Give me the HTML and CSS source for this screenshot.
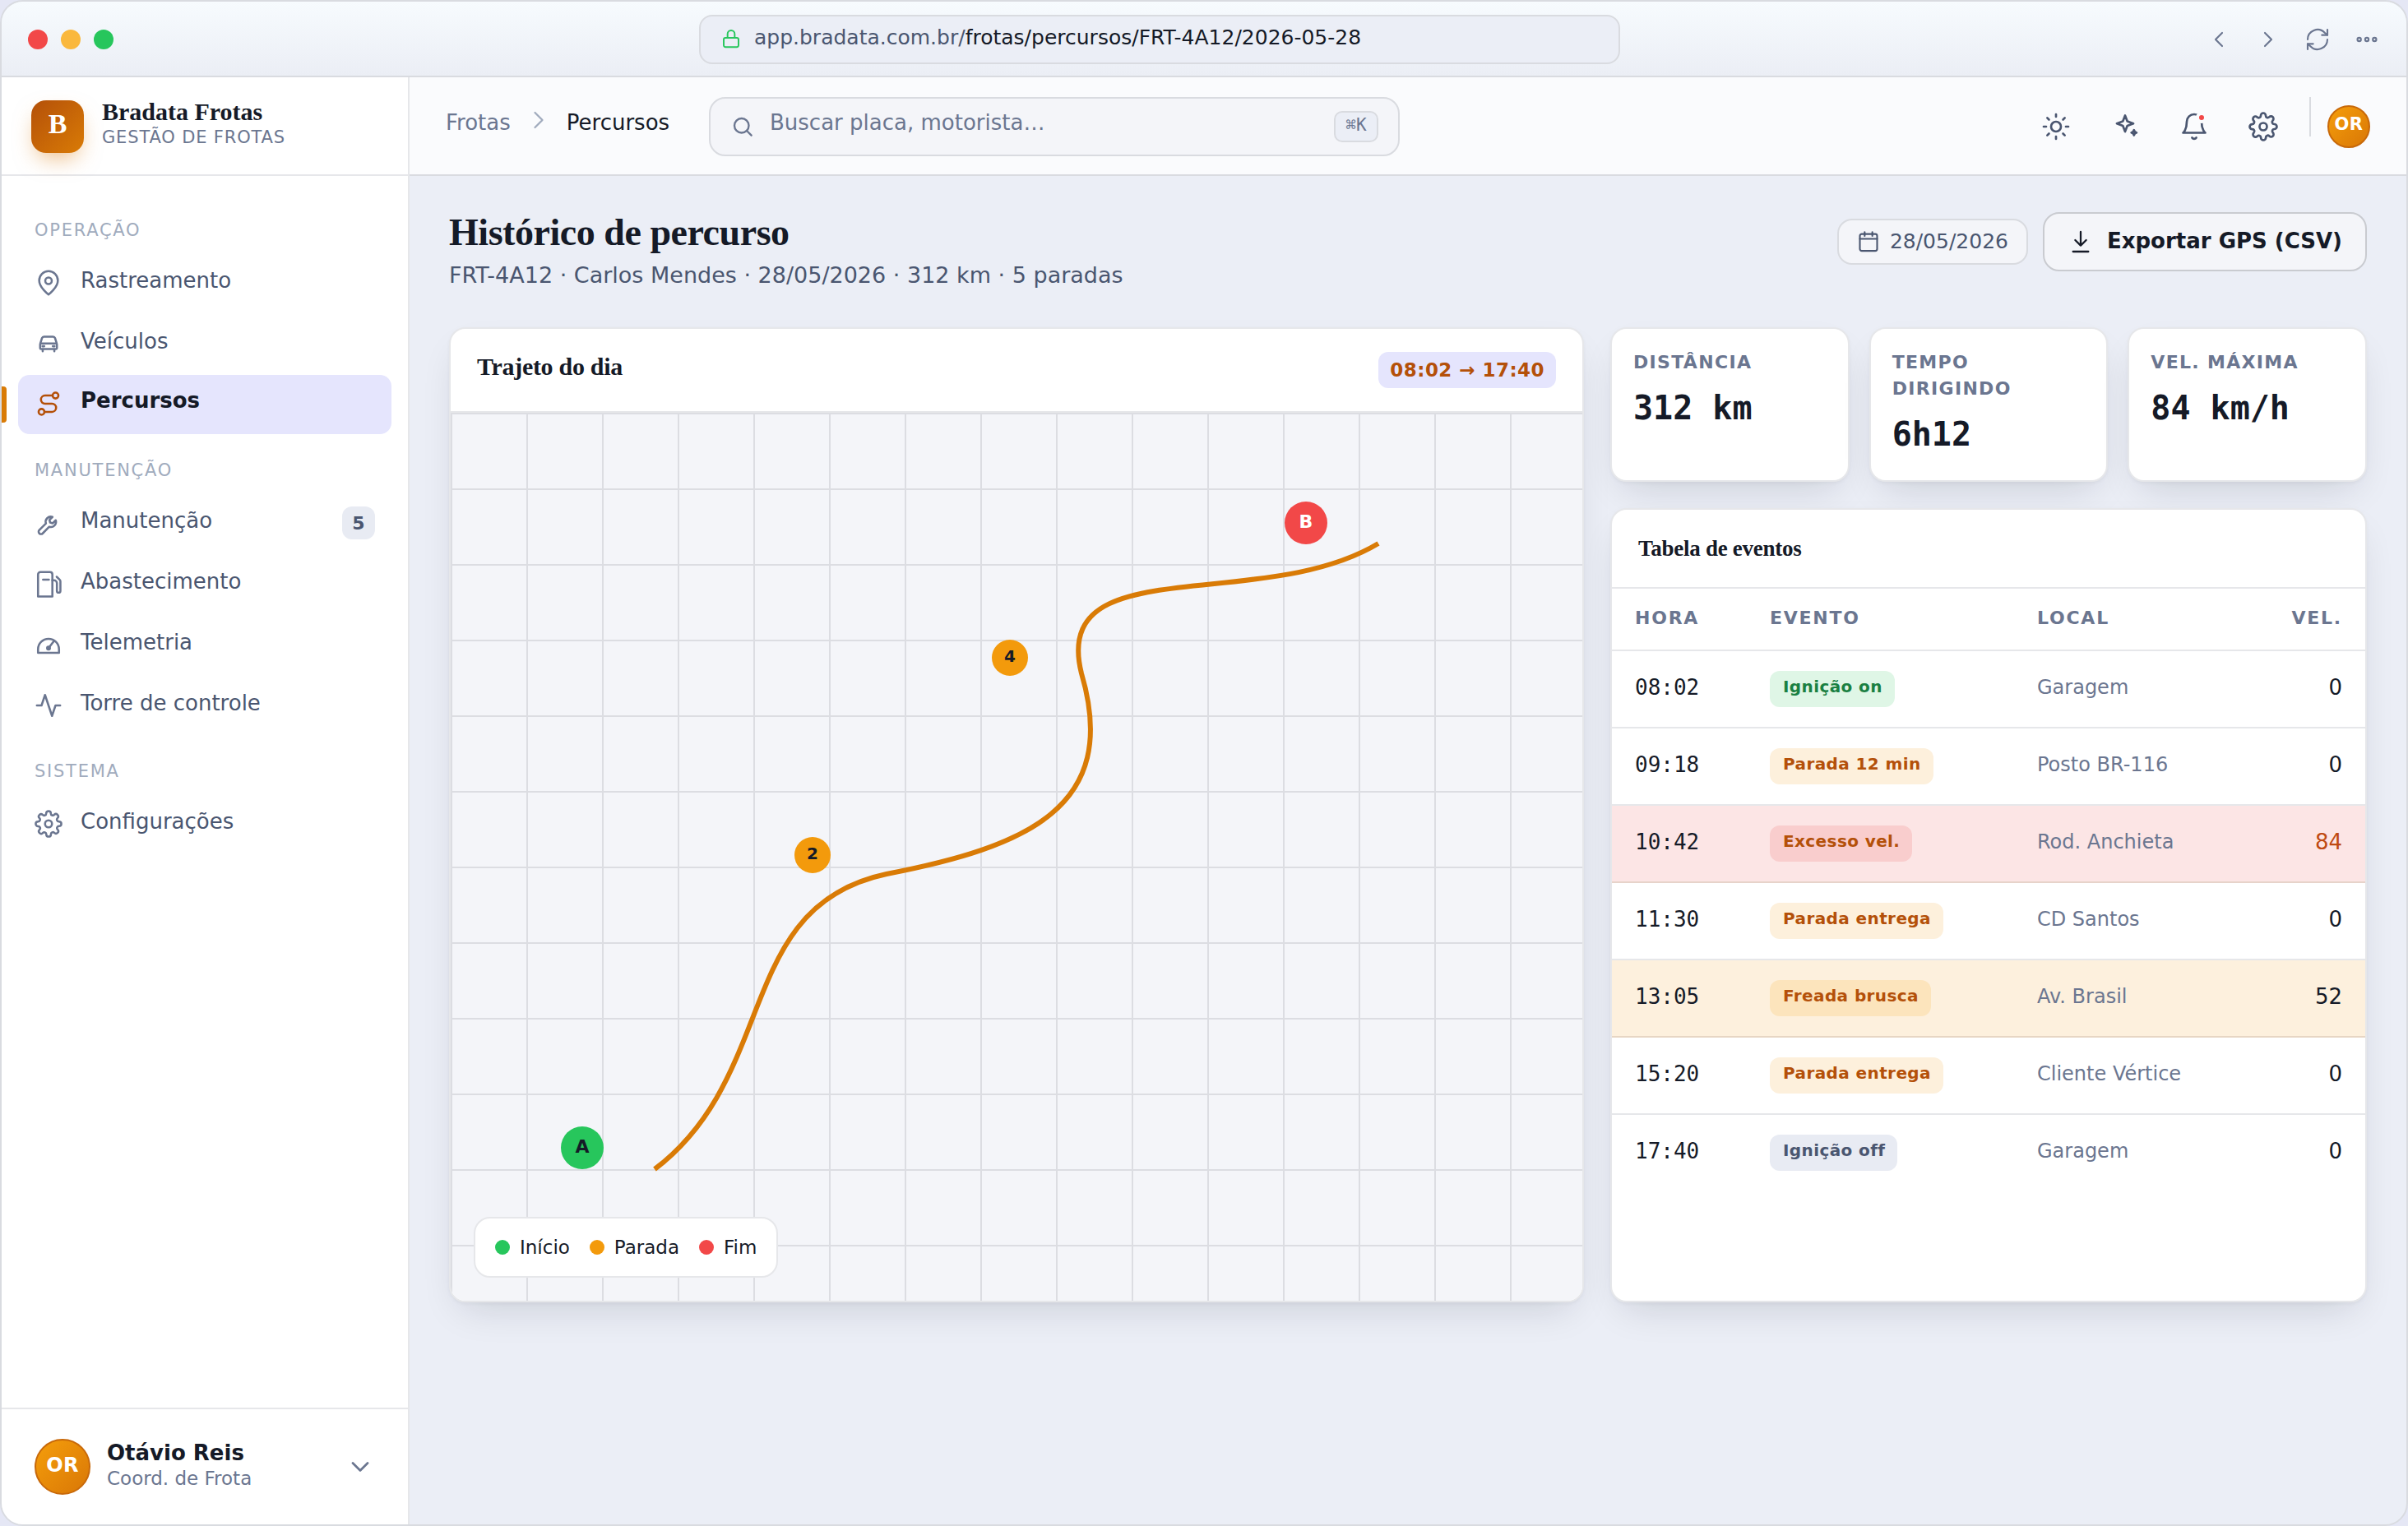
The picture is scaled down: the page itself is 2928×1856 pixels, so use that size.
FILE: index.html
```html
<!DOCTYPE html>
<html lang="pt-BR">
<head>
  <meta charset="UTF-8">
  <meta name="viewport" content="width=device-width, initial-scale=1.0">
  <title>Bradata Frotas - Histórico de percurso</title>
  <link rel="stylesheet" href="styles.css">
</head>
<body>
  <svg class="sprite" width="0" height="0">
    <symbol id="i-gear" viewBox="0 0 24 24">
      <circle cx="12" cy="12" r="3"/>
      <path d="M19.4 15a1.65 1.65 0 0 0 .33 1.82l.06.06a2 2 0 0 1-2.83 2.83l-.06-.06a1.65 1.65 0 0 0-1.82-.33 1.65 1.65 0 0 0-1 1.51V21a2 2 0 0 1-4 0v-.09A1.65 1.65 0 0 0 9 19.4a1.65 1.65 0 0 0-1.82.33l-.06.06a2 2 0 0 1-2.83-2.83l.06-.06a1.65 1.65 0 0 0 .33-1.82 1.65 1.65 0 0 0-1.51-1H3a2 2 0 0 1 0-4h.09A1.65 1.65 0 0 0 4.6 9a1.65 1.65 0 0 0-.33-1.82l-.06-.06a2 2 0 0 1 2.83-2.83l.06.06a1.65 1.65 0 0 0 1.82.33H9a1.65 1.65 0 0 0 1-1.51V3a2 2 0 0 1 4 0v.09a1.65 1.65 0 0 0 1 1.51 1.65 1.65 0 0 0 1.82-.33l.06-.06a2 2 0 0 1 2.83 2.83l-.06.06a1.65 1.65 0 0 0-.33 1.82V9a1.65 1.65 0 0 0 1.51 1H21a2 2 0 0 1 0 4h-.09a1.65 1.65 0 0 0-1.51 1z"/>
    </symbol>
    <symbol id="i-right" viewBox="0 0 24 24"><path d="M9 18l6-6-6-6"/></symbol>
  </svg>

  <div class="window">
    <header class="titlebar">
      <div class="lights">
        <span class="light red"></span>
        <span class="light yellow"></span>
        <span class="light green"></span>
      </div>
      <div class="url">
        <svg class="icon lock" viewBox="0 0 24 24"><rect x="3.7" y="10.1" width="16.6" height="10.4" rx="2"/><path d="M8 10.1V5.8a4 4 0 0 1 8 0v4.3"/></svg>
        <span class="url-text">app.bradata.com.br/<b>frotas/percursos/FRT-4A12/2026-05-28</b></span>
      </div>
      <div class="browser-nav">
        <svg class="icon" viewBox="0 0 24 24"><path d="M15 18l-6-6 6-6"/></svg>
        <svg class="icon" viewBox="0 0 24 24"><use href="#i-right"/></svg>
        <svg class="icon" viewBox="0 0 24 24"><path d="M3 12a9 9 0 0 1 15.5-6.2L21 8"/><path d="M21 3v5h-5"/><path d="M21 12a9 9 0 0 1-15.5 6.2L3 16"/><path d="M3 21v-5h5"/></svg>
        <svg class="icon" viewBox="0 0 24 24"><circle cx="5" cy="12" r="1.6"/><circle cx="12" cy="12" r="1.6"/><circle cx="19" cy="12" r="1.6"/></svg>
      </div>
    </header>

    <div class="app">
      <aside class="sidebar">
        <div class="brand">
          <div class="logo">B</div>
          <div>
            <div class="brand-name">Bradata Frotas</div>
            <div class="brand-sub">GESTÃO DE FROTAS</div>
          </div>
        </div>

        <nav class="nav">
          <div class="nav-label">OPERAÇÃO</div>
          <a class="nav-item">
            <svg class="icon" viewBox="0 0 24 24"><path d="M20 10c0 6-8 12-8 12s-8-6-8-12a8 8 0 0 1 16 0z"/><circle cx="12" cy="10.2" r="2.8"/></svg>
            <span>Rastreamento</span>
          </a>
          <a class="nav-item">
            <svg class="icon" viewBox="0 0 24 24"><path d="M5 11.8l1.4-4.6A1.8 1.8 0 0 1 8.1 6h7.8a1.8 1.8 0 0 1 1.7 1.2L19 11.8"/><rect x="4.8" y="11.8" width="14.4" height="4.8" rx=".8"/><path d="M7 17v1.5M17 17v1.5M6.8 14.2h1.5M15.7 14.2h1.5"/></svg>
            <span>Veículos</span>
          </a>
          <a class="nav-item active">
            <svg class="icon" viewBox="0 0 24 24"><circle cx="6" cy="19" r="2.5"/><circle cx="18" cy="5" r="2.5"/><path d="M15.5 5H9a3.5 3.5 0 0 0 0 7h6a3.5 3.5 0 0 1 0 7H8.5"/></svg>
            <span>Percursos</span>
          </a>

          <div class="nav-label">MANUTENÇÃO</div>
          <a class="nav-item">
            <svg class="icon" viewBox="0 0 24 24"><path d="M15.4 6.9a4.4 4.4 0 0 0-5.6 5.6l-5.7 5.6a2 2 0 0 0 2.9 2.9l5.6-5.7a4.4 4.4 0 0 0 5.6-5.6l-2.6 2.6-2.2-.6-.6-2.2z"/></svg>
            <span>Manutenção</span>
            <em class="count">5</em>
          </a>
          <a class="nav-item">
            <svg class="icon" viewBox="0 0 24 24"><path d="M3 23V4a2 2 0 0 1 2-2h8.3a2 2 0 0 1 2 2v19z"/><path d="M7.3 8.5h5"/><path d="M15.3 9h1.4a2.5 2.5 0 0 1 2.5 2.5v6.6a1.5 1.5 0 0 0 3 0V9.9a2 2 0 0 0-.6-1.4L19 6"/></svg>
            <span>Abastecimento</span>
          </a>
          <a class="nav-item">
            <svg class="icon" viewBox="0 0 24 24"><path d="M3 19v-3a9 9 0 0 1 18 0v3z"/><path d="M12 15l4.6-6"/><circle cx="12" cy="15" r="1.2"/></svg>
            <span>Telemetria</span>
          </a>
          <a class="nav-item">
            <svg class="icon" viewBox="0 0 24 24"><path d="M22 12h-4l-3 9L9 3l-3 9H2"/></svg>
            <span>Torre de controle</span>
          </a>

          <div class="nav-label">SISTEMA</div>
          <a class="nav-item">
            <svg class="icon" viewBox="0 0 24 24"><use href="#i-gear"/></svg>
            <span>Configurações</span>
          </a>
        </nav>

        <div class="user">
          <div class="avatar large">OR</div>
          <div class="user-info">
            <div class="user-name">Otávio Reis</div>
            <div class="user-role">Coord. de Frota</div>
          </div>
          <svg class="icon" viewBox="0 0 24 24"><path d="M6 9l6 6 6-6"/></svg>
        </div>
      </aside>

      <div class="main">
        <div class="topbar">
          <div class="crumbs">
            <span>Frotas</span>
            <svg class="icon" viewBox="0 0 24 24"><use href="#i-right"/></svg>
            <span class="current">Percursos</span>
          </div>
          <div class="search">
            <svg class="icon" viewBox="0 0 24 24"><circle cx="11" cy="11" r="7"/><path d="M20.5 20.5L16 16"/></svg>
            <span class="search-text">Buscar placa, motorista…</span>
            <span class="kbd">⌘K</span>
          </div>
          <div class="tools">
            <div class="tool"><svg class="icon" viewBox="0 0 24 24"><circle cx="12" cy="12" r="4"/><path d="M12 2v2M12 20v2M4.9 4.9l1.4 1.4M17.7 17.7l1.4 1.4M2 12h2M20 12h2M6.3 17.7l-1.4 1.4M19.1 4.9l-1.4 1.4"/></svg></div>
            <div class="tool"><svg class="icon" viewBox="0 0 24 24"><path d="M12 3l1.8 4.7 4.9 1.8-4.9 1.8L12 16l-1.8-4.7-4.9-1.8 4.9-1.8z"/><path d="M19.2 14.8l.7 1.4 1.4.7-1.4.7-.7 1.4-.7-1.4-1.4-.7 1.4-.7z"/></svg></div>
            <div class="tool"><svg class="icon" viewBox="0 0 24 24"><path d="M18 8A6 6 0 0 0 6 8c0 7-3 9-3 9h18s-3-2-3-9"/><path d="M13.7 21a2 2 0 0 1-3.4 0"/></svg><i class="dot"></i></div>
            <div class="tool"><svg class="icon" viewBox="0 0 24 24"><use href="#i-gear"/></svg></div>
            <div class="sep"></div>
            <div class="avatar">OR</div>
          </div>
        </div>

        <div class="content">
          <div class="page-head">
            <div>
              <h1>Histórico de percurso</h1>
              <p>FRT-4A12 · Carlos Mendes · 28/05/2026 · 312 km · 5 paradas</p>
            </div>
            <div class="actions">
              <div class="date">
                <svg class="icon" viewBox="0 0 24 24"><rect x="3" y="4" width="18" height="17.5" rx="2"/><path d="M3 9h18M8 2v4M16 2v4"/></svg>
                <span>28/05/2026</span>
              </div>
              <button class="export">
                <svg class="icon" viewBox="0 0 24 24"><path d="M12 3v12.5M7 10.5l5 5 5-5M5 21h14"/></svg>
                <span>Exportar GPS (CSV)</span>
              </button>
            </div>
          </div>

          <div class="grid">
            <section class="card map-card">
              <div class="card-head">
                <h2>Trajeto do dia</h2>
                <span class="period">08:02 → 17:40</span>
              </div>
              <div class="map">
                <svg class="route" viewBox="0 0 1376 1080">
                  <path d="M248 920C400 805 345 600 530 561C700 528 815 480 767 317C729 165 985 245 1128 159"/>
                </svg>
                <span class="pin start">A</span>
                <span class="pin stop stop-2">2</span>
                <span class="pin stop stop-4">4</span>
                <span class="pin end">B</span>
                <div class="legend">
                  <span><i class="green"></i>Início</span>
                  <span><i class="amber"></i>Parada</span>
                  <span><i class="red"></i>Fim</span>
                </div>
              </div>
            </section>

            <div class="side">
              <div class="stats">
                <div class="card stat"><span>DISTÂNCIA</span><strong>312 km</strong></div>
                <div class="card stat"><span>TEMPO DIRIGINDO</span><strong>6h12</strong></div>
                <div class="card stat"><span>VEL. MÁXIMA</span><strong>84 km/h</strong></div>
              </div>
              <section class="card events">
                <h3>Tabela de eventos</h3>
                <table>
                  <thead>
                    <tr><th class="c-time">HORA</th><th class="c-event">EVENTO</th><th class="c-place">LOCAL</th><th class="num">VEL.</th></tr>
                  </thead>
                  <tbody>
                    <tr><td class="time">08:02</td><td class="ev"><span class="tag ok">Ignição on</span></td><td class="place">Garagem</td><td class="num">0</td></tr>
                    <tr><td class="time">09:18</td><td class="ev"><span class="tag warn">Parada 12 min</span></td><td class="place">Posto BR-116</td><td class="num">0</td></tr>
                    <tr class="row-danger"><td class="time">10:42</td><td class="ev"><span class="tag danger">Excesso vel.</span></td><td class="place">Rod. Anchieta</td><td class="num over">84</td></tr>
                    <tr><td class="time">11:30</td><td class="ev"><span class="tag warn">Parada entrega</span></td><td class="place">CD Santos</td><td class="num">0</td></tr>
                    <tr class="row-warn"><td class="time">13:05</td><td class="ev"><span class="tag warn-strong">Freada brusca</span></td><td class="place">Av. Brasil</td><td class="num">52</td></tr>
                    <tr><td class="time">15:20</td><td class="ev"><span class="tag warn">Parada entrega</span></td><td class="place">Cliente Vértice</td><td class="num">0</td></tr>
                    <tr><td class="time">17:40</td><td class="ev"><span class="tag off">Ignição off</span></td><td class="place">Garagem</td><td class="num">0</td></tr>
                  </tbody>
                </table>
              </section>
            </div>
          </div>
        </div>
      </div>
    </div>
  </div>
</body>
</html>
```
FILE: styles.css
```css
:root {
  --ink: #151a27;
  --text: #4a5670;
  --muted: #6b7690;
  --faint: #a0abbd;
  --line: #e6e7ea;
  --line-strong: #d9dbe0;
  --surface: #f4f5f9;
  --bg: #ebeef6;
  --brand: #d97b06;
  --brand-dark: #b45009;
  --green: #27c65c;
  --amber: #f39a0c;
  --red: #f24848;
  --serif: "Liberation Serif", serif;
  --mono: "DejaVu Sans Mono", monospace;
}

* {
  box-sizing: border-box;
}

body {
  margin: 0;
  font-family: "DejaVu Sans", sans-serif;
  font-size: 26px;
  color: var(--ink);
  background: #e5e7f5;
}

h1, h2, h3, p {
  margin: 0;
}

.sprite {
  position: absolute;
}

.icon {
  width: 36px;
  height: 36px;
  flex: none;
  fill: none;
  stroke: currentColor;
  stroke-width: 1.8;
  stroke-linecap: round;
  stroke-linejoin: round;
}

.window {
  display: flex;
  flex-direction: column;
  height: 1856px;
  border: 2px solid var(--line-strong);
  border-radius: 28px;
  overflow: hidden;
  background: var(--bg);
}

/* browser chrome */

.titlebar {
  display: grid;
  grid-template-columns: 816px 1120px 1fr;
  align-items: center;
  height: 92px;
  flex: none;
  padding: 2px 32px 0;
  border-bottom: 2px solid var(--line-strong);
  background: linear-gradient(#f7fbfe, #ebeef5);
}

.lights {
  display: flex;
  gap: 16px;
}

.light {
  width: 24px;
  height: 24px;
  border-radius: 50%;
}

.red { background: var(--red); }
.yellow { background: #fab83d; }
.green { background: var(--green); }
.amber { background: var(--amber); }

.url {
  display: flex;
  align-items: center;
  gap: 15px;
  height: 60px;
  padding: 0 24px;
  border: 2px solid var(--line-strong);
  border-radius: 16px;
  background: var(--bg);
  font-size: 25px;
  color: var(--text);
}

.url .lock {
  width: 26px;
  height: 26px;
  stroke: var(--green);
}

.url-text {
  padding-bottom: 5px;
}

.url b {
  font-weight: normal;
  color: var(--ink);
}

.browser-nav {
  display: flex;
  justify-content: flex-end;
  gap: 28px;
  color: var(--muted);
}

.browser-nav .icon {
  width: 32px;
  height: 32px;
  stroke-width: 1.6;
}

.app {
  display: flex;
  flex: 1;
  min-height: 0;
}

/* sidebar */

.sidebar {
  display: flex;
  flex-direction: column;
  width: 496px;
  flex: none;
  border-right: 2px solid var(--line);
  background: #fff;
}

.brand {
  display: flex;
  gap: 22px;
  height: 120px;
  padding: 24px 36px 0;
  border-bottom: 2px solid var(--line);
}

.logo {
  display: flex;
  align-items: center;
  justify-content: center;
  width: 64px;
  height: 64px;
  margin-top: 4px;
  padding-bottom: 6px;
  border-radius: 18px;
  background: linear-gradient(135deg, var(--brand-dark), var(--brand));
  box-shadow: 0 12px 28px -8px rgba(217, 119, 6, 0.55);
  color: #fff;
  font-family: var(--serif);
  font-size: 34px;
  font-weight: bold;
}

.brand-name {
  font-family: var(--serif);
  font-size: 30px;
  font-weight: bold;
  line-height: 36px;
}

.brand-sub {
  font-size: 21px;
  line-height: 26px;
  letter-spacing: 0.04em;
  color: var(--muted);
}

.nav {
  flex: 1;
  padding: 22px 20px 0;
}

.nav-label {
  height: 72px;
  padding: 28px 20px 0;
  font-size: 21px;
  line-height: 32px;
  letter-spacing: 1.75px;
  color: var(--faint);
}

.nav-item {
  display: flex;
  align-items: center;
  gap: 22px;
  height: 72px;
  margin-bottom: 2px;
  padding: 0 20px;
  border-radius: 14px;
  color: var(--text);
}

.nav-item:has(+ .nav-label) {
  margin-bottom: 0;
}

.nav-item span {
  padding-bottom: 6px;
}

.nav-item .icon {
  width: 34px;
  height: 34px;
  color: var(--muted);
}

.nav-item.active {
  position: relative;
  padding-bottom: 2px;
  background: #e5e5fd;
  color: var(--ink);
  font-weight: bold;
}

.nav-item.active span {
  padding-bottom: 8px;
}

.nav-item.active .icon {
  color: var(--brand-dark);
}

.nav-item.active::before {
  content: "";
  position: absolute;
  left: -20px;
  top: 14px;
  width: 6px;
  height: 44px;
  border-radius: 0 4px 4px 0;
  background: var(--brand);
}

.count {
  width: 40px;
  height: 40px;
  margin-left: auto;
  border-radius: 12px;
  background: #e8ebf3;
  font-size: 22px;
  font-style: normal;
  font-weight: bold;
  line-height: 41px;
  text-align: center;
}

.user {
  display: flex;
  align-items: center;
  gap: 20px;
  height: 142px;
  padding: 0 40px;
  border-top: 2px solid var(--line);
  color: var(--muted);
}

.user-info {
  flex: 1;
  padding-bottom: 4px;
}

.user-name {
  font-weight: bold;
  line-height: 32px;
  color: var(--ink);
}

.user-role {
  font-size: 23px;
  line-height: 30px;
}

.avatar {
  display: flex;
  align-items: center;
  justify-content: center;
  width: 52px;
  height: 52px;
  padding-bottom: 6px;
  border: 2px solid #c8690a;
  border-radius: 50%;
  background: linear-gradient(135deg, #f59e0b, #d97706);
  color: #fff;
  font-size: 21px;
  font-weight: bold;
  letter-spacing: 0.4px;
}

.avatar.large {
  width: 68px;
  height: 68px;
  padding-bottom: 4px;
  font-size: 24px;
}

/* top bar */

.main {
  flex: 1;
  min-width: 0;
}

.topbar {
  display: flex;
  align-items: center;
  height: 120px;
  padding: 2px 44px 0;
  border-bottom: 2px solid var(--line-strong);
  background: #fafbfd;
}

.crumbs {
  display: flex;
  align-items: center;
  gap: 16px;
  width: 320px;
  color: var(--muted);
}

.crumbs span {
  padding-bottom: 10px;
}

.crumbs .icon {
  margin-bottom: 16px;
  stroke-width: 1.5;
  color: var(--faint);
}

.crumbs .current {
  color: var(--ink);
}

.search {
  display: flex;
  align-items: center;
  gap: 18px;
  width: 840px;
  height: 72px;
  padding: 0 24px;
  border: 2px solid var(--line-strong);
  border-radius: 20px;
  background: var(--surface);
  color: var(--muted);
}

.search .icon {
  width: 30px;
  height: 30px;
  stroke-width: 1.9;
}

.search-text {
  flex: 1;
  padding-bottom: 10px;
}

.kbd {
  width: 54px;
  height: 38px;
  border: 2px solid var(--line-strong);
  border-radius: 10px;
  background: var(--bg);
  font-family: var(--mono);
  font-size: 21px;
  line-height: 31px;
  text-align: center;
}

.tools {
  display: flex;
  align-items: center;
  height: 100%;
  margin-left: auto;
  color: var(--text);
}

.tool {
  position: relative;
  display: flex;
  justify-content: center;
  width: 72px;
  margin-right: 12px;
}

.dot {
  position: absolute;
  left: 38px;
  top: 0;
  width: 14px;
  height: 14px;
  border: 4px solid #fafbfd;
  border-radius: 50%;
  background: var(--red);
}

.sep {
  align-self: flex-start;
  width: 2px;
  height: 48px;
  margin: 22px 20px 0 8px;
  background: var(--line-strong);
}

/* page */

.content {
  padding: 42px 48px 0;
}

.page-head {
  display: flex;
  justify-content: space-between;
  height: 142px;
}

h1 {
  font-family: var(--serif);
  font-size: 46px;
  line-height: 53px;
  letter-spacing: -0.01em;
}

.page-head p {
  margin-top: 8px;
  font-size: 27px;
  line-height: 36px;
  color: var(--text);
}

.actions {
  display: flex;
  align-items: center;
  gap: 18px;
  height: 72px;
  margin-top: 2px;
}

.date {
  display: flex;
  align-items: center;
  gap: 12px;
  height: 56px;
  padding: 0 22px;
  border: 2px solid var(--line-strong);
  border-radius: 18px;
  background: var(--surface);
  color: var(--text);
  font-size: 25px;
}

.date .icon {
  width: 28px;
  height: 28px;
}

.date span {
  padding-bottom: 1px;
}

.export {
  display: flex;
  align-items: center;
  gap: 16px;
  height: 72px;
  padding: 0 28px;
  border: 2px solid #c9cbd0;
  border-radius: 20px;
  background: var(--surface);
  color: var(--ink);
  font: bold 26px "DejaVu Sans", sans-serif;
}

.export .icon {
  width: 32px;
  height: 32px;
  stroke-width: 1.7;
}

.export span {
  padding-bottom: 2px;
}

.grid {
  display: grid;
  grid-template-columns: 1.5fr 1fr;
  gap: 32px;
  height: 1186px;
}

.card {
  border: 2px solid var(--line);
  border-radius: 20px;
  background: #fff;
  box-shadow: 0 2px 4px rgba(0, 0, 0, 0.04), 0 20px 48px -16px rgba(15, 20, 35, 0.16);
}

.map-card {
  display: flex;
  flex-direction: column;
  overflow: hidden;
}

.card-head {
  display: flex;
  align-items: center;
  justify-content: space-between;
  height: 102px;
  flex: none;
  padding: 0 32px;
  border-bottom: 2px solid var(--line);
}

h2 {
  padding-bottom: 8px;
  font-family: var(--serif);
  font-size: 30px;
  letter-spacing: -0.01em;
}

.period {
  height: 44px;
  padding: 0 14px;
  border-radius: 12px;
  background: #e5e5fd;
  color: var(--brand-dark);
  font-size: 23px;
  font-weight: bold;
  line-height: 44px;
  letter-spacing: 0.02em;
}

.map {
  position: relative;
  flex: 1;
  background-color: var(--surface);
  background-image:
    linear-gradient(#dcdde2 2px, transparent 2px),
    linear-gradient(90deg, #dcdde2 2px, transparent 2px);
  background-size: 92px 92px;
}

.route {
  display: block;
  width: 1376px;
  height: 1080px;
  fill: none;
  stroke: var(--brand);
  stroke-width: 6;
}

.pin {
  position: absolute;
  display: flex;
  align-items: center;
  justify-content: center;
  width: 52px;
  height: 52px;
  padding-bottom: 4px;
  border-radius: 50%;
  font-size: 22px;
  font-weight: bold;
}

.pin.stop {
  width: 44px;
  height: 44px;
  background: var(--amber);
  font-size: 20px;
}

.pin.start {
  left: 134px;
  top: 868px;
  background: var(--green);
}

.pin.end {
  left: 1014px;
  top: 108px;
  background: var(--red);
  color: #fff;
}

.pin.stop-2 {
  left: 418px;
  top: 516px;
}

.pin.stop-4 {
  left: 658px;
  top: 276px;
}

.legend {
  position: absolute;
  left: 28px;
  bottom: 28px;
  display: flex;
  align-items: center;
  gap: 24px;
  height: 74px;
  padding: 0 24px;
  border: 2px solid var(--line);
  border-radius: 20px;
  background: #fff;
  font-size: 23px;
}

.legend span {
  display: flex;
  align-items: center;
  gap: 12px;
}

.legend i {
  width: 18px;
  height: 18px;
  border-radius: 50%;
}

.side {
  display: flex;
  flex-direction: column;
  gap: 32px;
}

.stats {
  display: grid;
  grid-template-columns: repeat(3, 1fr);
  gap: 24px;
  height: 188px;
  flex: none;
}

.stat {
  padding: 25px 26px;
}

.stat span {
  display: block;
  font-size: 22px;
  font-weight: bold;
  line-height: 32px;
  letter-spacing: 0.06em;
  color: var(--muted);
}

.stat strong {
  display: block;
  margin-top: 15px;
  font-family: var(--mono);
  font-size: 40px;
  line-height: 48px;
}

.events {
  flex: 1;
  overflow: hidden;
}

h3 {
  padding: 0 32px;
  font-family: var(--serif);
  font-size: 27px;
  line-height: 94px;
  letter-spacing: -0.01em;
}

table {
  width: 100%;
  table-layout: fixed;
  border-spacing: 0;
  border-top: 2px solid var(--line);
  white-space: nowrap;
}

th {
  height: 76px;
  padding: 0 28px 3px;
  border-bottom: 2px solid var(--line);
  font-size: 22px;
  letter-spacing: 0.08em;
  text-align: left;
  color: var(--muted);
}

td {
  height: 94px;
  padding: 0 28px 5px;
  border-bottom: 2px solid var(--line);
}

.c-time { width: 164px; }
.c-event { width: 325px; }
.c-place { width: 260px; }

tbody tr:last-child td {
  border-bottom-color: transparent;
}

.time {
  font-family: var(--mono);
}

td.ev {
  padding-bottom: 0;
}

.place {
  font-size: 24px;
  color: var(--muted);
}

.num {
  text-align: right;
}

.over {
  color: #bf4a12;
}

.row-danger td {
  background: #fce5e5;
  border-bottom-color: #e7d3ca;
}

.row-warn td {
  background: #fdf0dd;
  border-bottom-color: #e7d6c4;
}

.tag {
  display: block;
  width: fit-content;
  height: 44px;
  padding: 0 15px 0 16px;
  border-radius: 12px;
  font-size: 20px;
  font-weight: bold;
  line-height: 38px;
  letter-spacing: 0.02em;
}

.ok { background: #dff6e6; color: #1a8042; }
.warn { background: #fdf0dc; color: var(--brand-dark); }
.danger { background: #f9cdcd; color: var(--brand-dark); }
.warn-strong { background: #fce4bc; color: var(--brand-dark); }
.off { background: #e8ebf3; color: var(--text); }
```
